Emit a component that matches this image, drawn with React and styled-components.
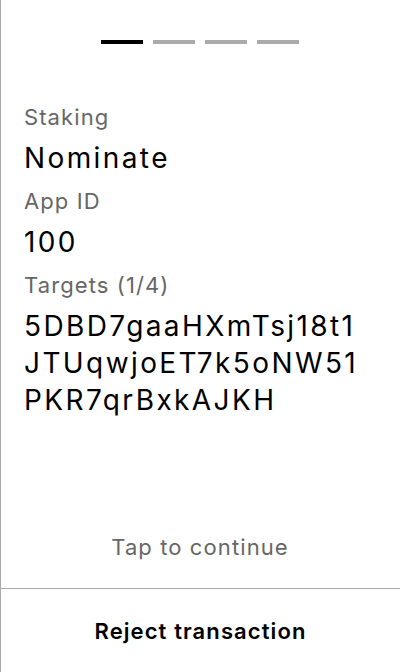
import React from "react";
import styled, { createGlobalStyle } from "styled-components";

const Global = createGlobalStyle`
  html, body { margin: 0; padding: 0; background: #fff; }
  body { font-family: Inter, "Noto Sans", sans-serif; -webkit-font-smoothing: antialiased; }
  * { box-sizing: border-box; }
`;

const Screen = styled.div`
  width: 400px;
  height: 672px;
  border-left: 1px solid #aaaaaa;
  display: flex;
  flex-direction: column;
  background: #fff;
`;

const Main = styled.div`
  flex: 1;
  display: flex;
  flex-direction: column;
  padding: 40px 0 0 23px;
`;

const Progress = styled.div`
  display: flex;
  justify-content: center;
  gap: 10px;
  margin-bottom: 58px;
  margin-right: 24px;
`;

const Step = styled.div`
  width: 42px;
  height: 4px;
  background: ${(p) => (p.$active ? "#000000" : "#aaaaaa")};
`;

const Fields = styled.div`
  display: flex;
  flex-direction: column;
  padding-right: 32px;
`;

const Label = styled.div`
  font-size: 22px;
  line-height: 30px;
  letter-spacing: 1.1px;
  color: #666666;
  margin-bottom: 8px;
`;

const Value = styled.div`
  font-size: 28px;
  line-height: 37px;
  letter-spacing: 2.4px;
  color: #000;
  word-break: break-all;
  margin-bottom: 9px;
`;

const Hint = styled.div`
  margin-top: auto;
  margin-right: 24px;
  text-align: center;
  font-size: 22px;
  line-height: 30px;
  letter-spacing: 1.1px;
  color: #666666;
  padding-bottom: 26px;
`;

const Footer = styled.button`
  height: 84px;
  border: none;
  border-top: 1px solid #aaaaaa;
  background: #fff;
  font-family: Inter, "Noto Sans", sans-serif;
  font-size: 22px;
  font-weight: 600;
  letter-spacing: 1.1px;
  color: #000;
  display: flex;
  align-items: center;
  justify-content: center;
  padding: 0;
  cursor: pointer;
`;

const fields = [
  { label: "Staking", value: "Nominate" },
  { label: "App ID", value: "100" },
  { label: "Targets (1/4)", value: "5DBD7gaaHXmTsj18t1JTUqwjoET7k5oNW51PKR7qrBxkAJKH" },
];

export default function App() {
  return (
    <>
      <Global />
      <Screen>
        <Main>
          <Progress>
            {[0, 1, 2, 3].map((i) => (
              <Step key={i} $active={i === 0} />
            ))}
          </Progress>
          <Fields>
            {fields.map((f) => (
              <React.Fragment key={f.label}>
                <Label>{f.label}</Label>
                <Value>{f.value}</Value>
              </React.Fragment>
            ))}
          </Fields>
          <Hint>Tap to continue</Hint>
        </Main>
        <Footer>Reject transaction</Footer>
      </Screen>
    </>
  );
}
